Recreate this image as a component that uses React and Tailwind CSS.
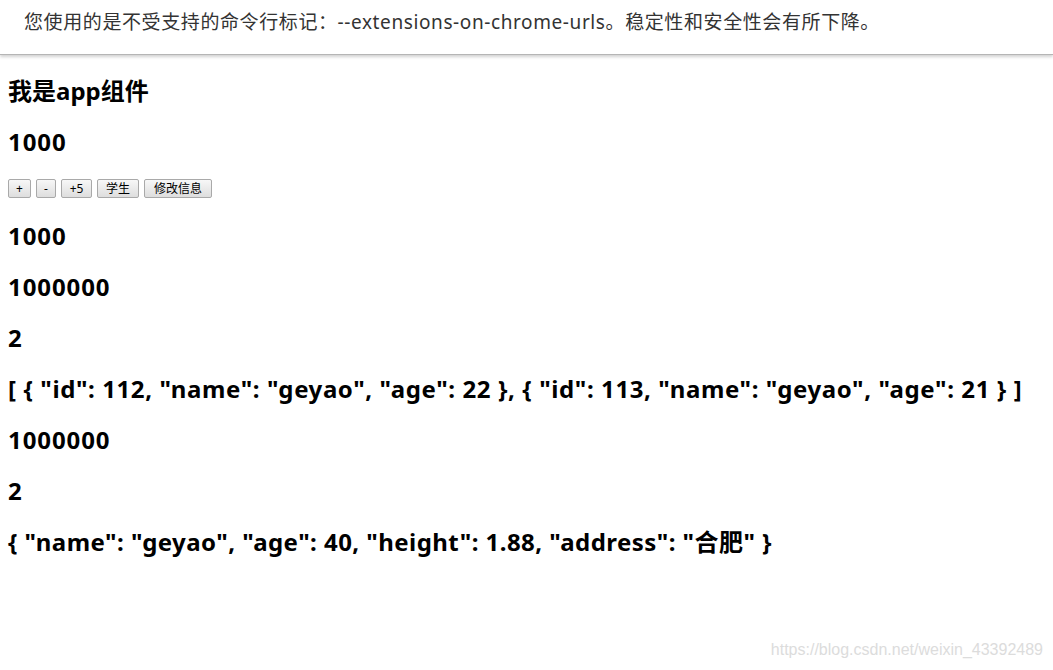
export default function App() {
  const heading =
    "text-[24px] leading-[31px] font-bold text-black whitespace-nowrap";
  const num = heading + " tracking-[0.9px]";
  const json = heading + " tracking-[0.6px]";
  const obj = heading + " tracking-[0.45px]";
  const btn =
    "h-[19px] px-[6px] text-[12px] leading-[17px] text-black border border-[#a9a9a9] rounded-[2px] bg-gradient-to-b from-[#f7f7f7] to-[#dedede]";

  return (
    <div
      className="relative min-h-[670px] bg-white"
      style={{ fontFamily: '"Noto Sans", "Noto Sans CJK SC", sans-serif' }}
    >
      {/* Browser info bar */}
      <div className="h-[55px] flex items-center pl-[24px] pb-[10px] bg-white border-b border-[#b5b5b5] shadow-[0_2px_3px_rgba(0,0,0,0.18)] text-[19px] tracking-[0.6px] text-[#333] whitespace-nowrap">
        您使用的是不受支持的命令行标记：--extensions-on-chrome-urls。稳定性和安全性会有所下降。
      </div>

      <div className="flex flex-col gap-[20px] pt-[20px] px-[8px]">
        <h2 className={heading}>我是app组件</h2>
        <h2 className={num}>1000</h2>
        <div className="flex items-center gap-[5px] h-[23px]">
          <button className={btn + " w-[23px]"}>+</button>
          <button className={btn + " w-[20px]"}>-</button>
          <button className={btn + " w-[31px]"}>+5</button>
          <button className={btn + " w-[42px]"}>学生</button>
          <button className={btn + " w-[68px]"}>修改信息</button>
        </div>
        <h2 className={num}>1000</h2>
        <h2 className={num}>1000000</h2>
        <h2 className={num}>2</h2>
        <h2 className={json}>
          {'[ { "id": 112, "name": "geyao", "age": 22 }, { "id": 113, "name": "geyao", "age": 21 } ]'}
        </h2>
        <h2 className={num}>1000000</h2>
        <h2 className={num}>2</h2>
        <h2 className={obj}>
          {'{ "name": "geyao", "age": 40, "height": 1.88, "address": "合肥" }'}
        </h2>
      </div>

      {/* watermark */}
      <div
        className="absolute right-[10px] bottom-[8px] text-[16px] text-[#dcdcdc]"
        style={{ fontFamily: '"Liberation Sans", Arial, sans-serif' }}
      >
        https://blog.csdn.net/weixin_43392489
      </div>
    </div>
  );
}
